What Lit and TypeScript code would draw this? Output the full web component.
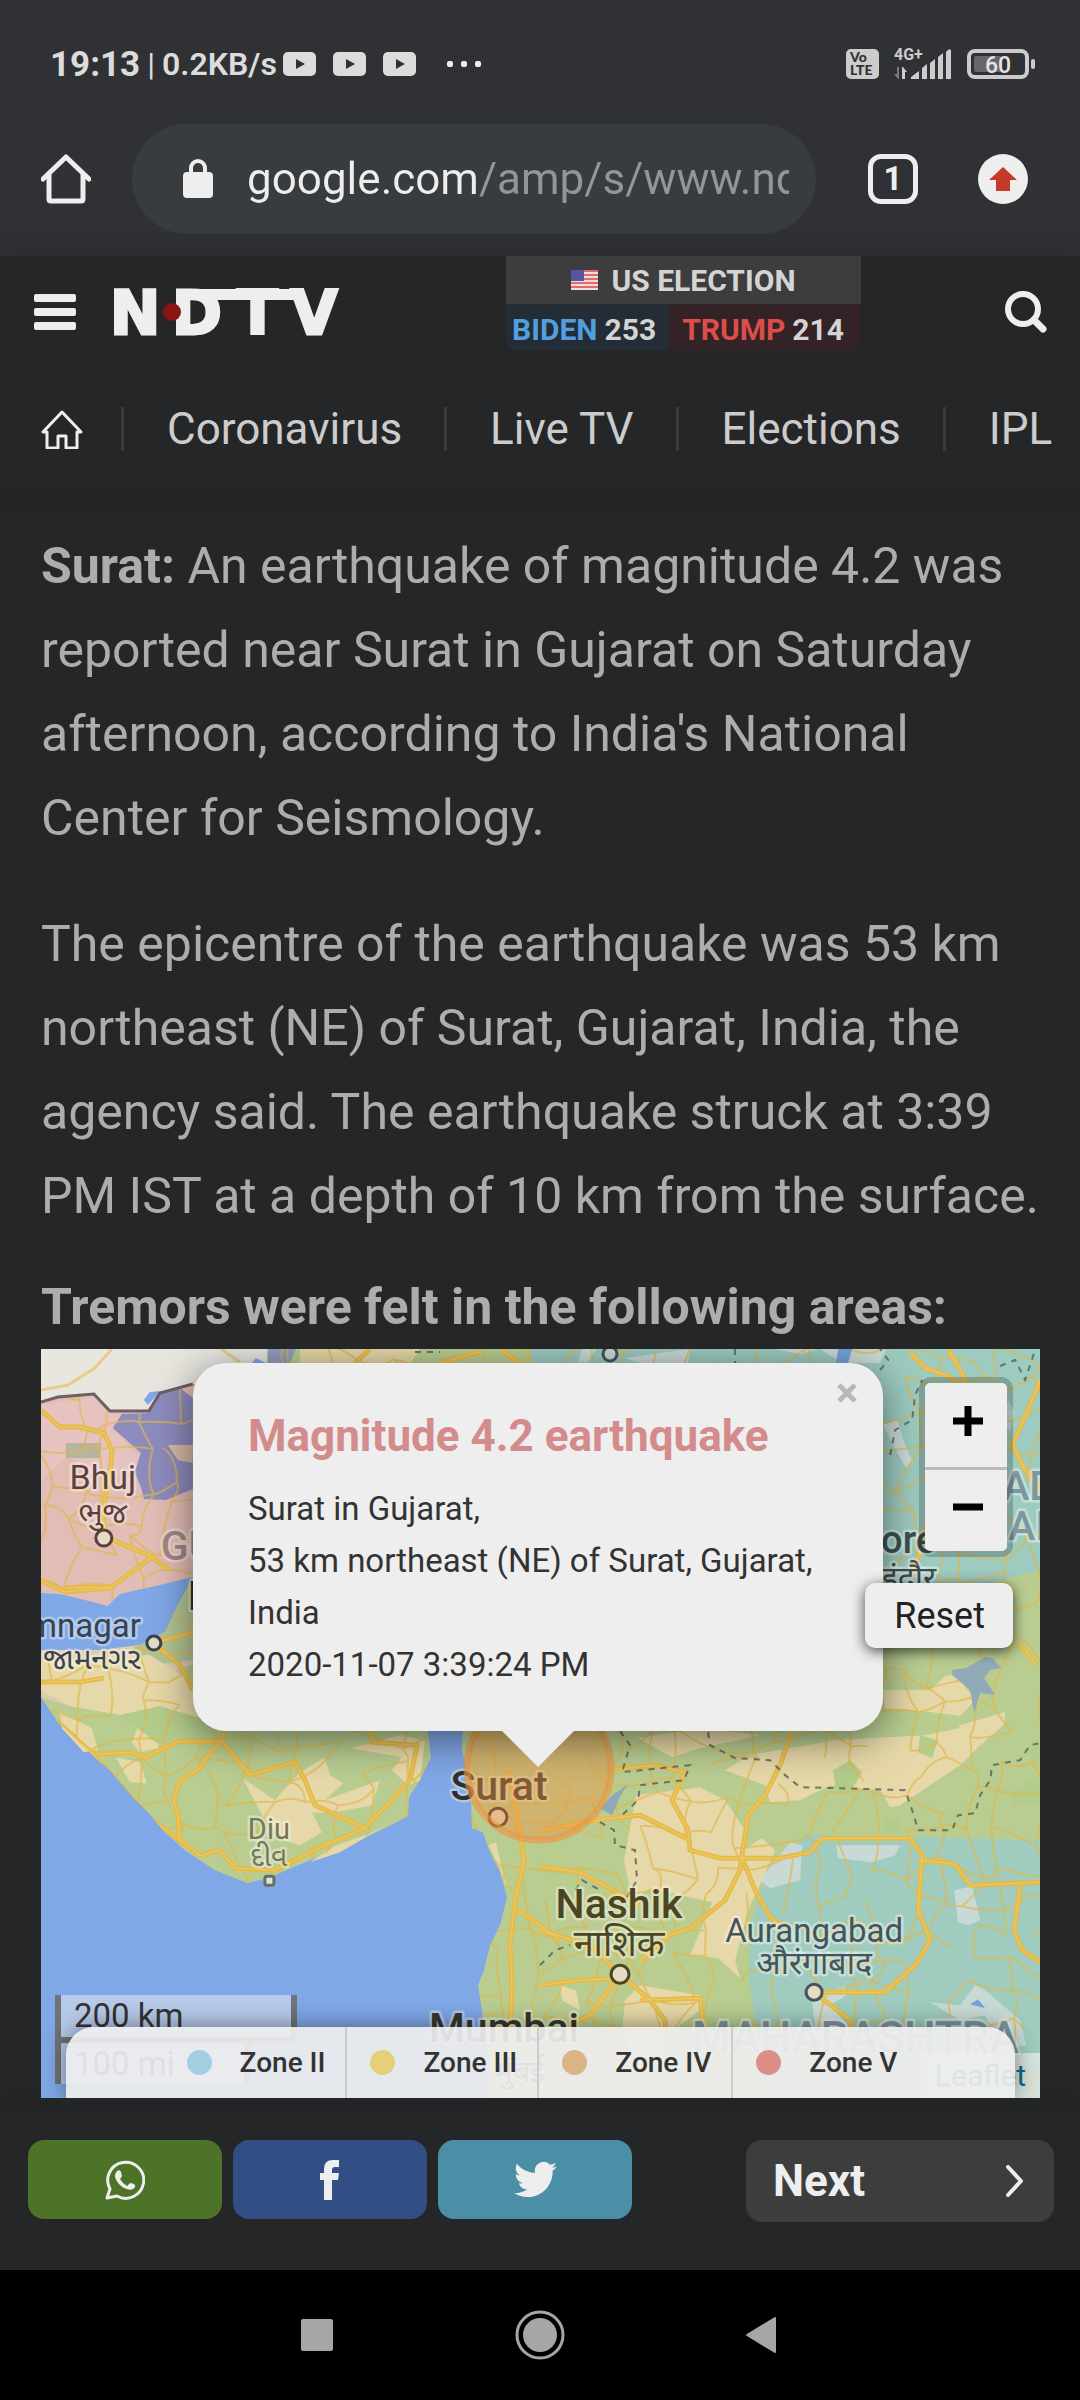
import { LitElement, html, css, svg } from "lit";
import { customElement, property } from "lit/decorators.js";
import { styleMap } from "lit/directives/style-map.js";

/* Coordinates of the map drawing share one user space: 41..1040 by 1349..2098. */

const MAINLAND =
  "M463 1731L462 1750 467 1768 471 1800 472 1828 483 1832 489 1850 500 1872 507 1897 500 1925 490 1945 484 1970 478 1985 482 2010 486 2040 488 2098H1040V1349H268L262 1420 430 1600Z";
const SAURASHTRA =
  "M41 1650L100 1650 140 1645 165 1632 178 1605 193 1577 300 1560 430 1600 428 1731 431 1757 420 1780 409 1797 408 1816 385 1828 365 1837 340 1848 310 1860 270 1877 248 1883 215 1870 185 1850 165 1832 150 1814 133 1797 110 1770 95 1757 75 1738 58 1722 41 1697Z";
const KUTCH =
  "M41 1402L58 1397 94 1394 110 1411 149 1411 160 1393 193 1384 260 1380 300 1560 193 1577 160 1585 120 1594 108 1606 85 1600 60 1594 41 1593Z";

/** Builds a jittered mesh of country roads from a small linear generator. */
function roadMesh(cell: number): string {
  let seed = 41;
  const rnd = () => {
    seed = (seed * 1103515245 + 12345) % 2147483648;
    return seed / 2147483648;
  };
  const cols = Math.ceil(1020 / cell) + 1;
  const rows = Math.ceil(770 / cell) + 1;
  const at: number[][][] = [];
  for (let r = 0; r < rows; r++) {
    at.push([]);
    for (let c = 0; c < cols; c++) {
      at[r].push([30 + (c + rnd() * 0.9) * cell, 1340 + (r + rnd() * 0.9) * cell]);
    }
  }
  let d = "";
  const link = (a: number[], b: number[]) => {
    const mx = (a[0] + b[0]) / 2 + (rnd() - 0.5) * 16;
    const my = (a[1] + b[1]) / 2 + (rnd() - 0.5) * 16;
    d += `M${a[0].toFixed(0)} ${a[1].toFixed(0)}Q${mx.toFixed(0)} ${my.toFixed(0)} ${b[0].toFixed(0)} ${b[1].toFixed(0)}`;
  };
  for (let r = 0; r < rows - 1; r++) {
    for (let c = 0; c < cols - 1; c++) {
      if (rnd() < 0.72) link(at[r][c], at[r][c + 1]);
      if (rnd() < 0.72) link(at[r][c], at[r + 1][c]);
    }
  }
  return d;
}
const ROADS = roadMesh(32);

const TAN_PATCHES = [
  "M60 1712L92 1728 98 1750 84 1752 62 1728Z",
  "M140 1722L162 1730 158 1748 140 1752 132 1742Z",
  "M116 1757L140 1762 147 1783 130 1782Z",
  "M243 1778L275 1800 300 1772 325 1757 330 1775 343 1783 325 1800 380 1780 372 1805 330 1813 312 1812 322 1832 300 1845 285 1840 262 1815Z",
  "M350 1748L400 1735 425 1740 420 1780 408 1785 392 1770 402 1757Z",
  "M310 1862L335 1846 368 1834 385 1826 340 1852Z",
  "M41 1660L150 1655 190 1680 240 1725 120 1715 70 1706 41 1690Z",
  "M638 1738L700 1728 760 1735 700 1748 672 1757Z",
  "M725 1770L750 1755 835 1740 925 1735 990 1722 1003 1722 960 1765 900 1805 890 1807 880 1790 830 1785 800 1800 770 1802 765 1785Z",
  "M636 1795L700 1787 725 1800 745 1830 742 1850 762 1838 775 1850 762 1880 750 1905 735 1960 740 1978 718 1958 690 1955 712 1902 650 1888 632 1900 624 1860Z",
  "M625 2000L640 1985 700 1995 705 2060 640 2070 622 2030Z",
  "M560 1985L576 1990 580 2010 562 2000Z",
  "M500 1868L489 1845 496 1842 507 1890Z",
  "M945 1676L955 1674 975 1700 960 1716 930 1712 885 1708 883 1690 930 1690Z",
  "M960 1725L1005 1712 1004 1724 975 1750 930 1780Z",
  "M300 1349H420L400 1380H300Z",
];

const GREEN_PATCHES = [
  "M120 1715L160 1706 190 1715 260 1735 250 1760 200 1750 190 1728 160 1745Z",
  "M833 1770L850 1760 862 1772 850 1792 835 1785Z",
  "M920 1735L938 1740 932 1758 918 1752Z",
  "M1010 1795L1030 1780 1040 1785V1805L1015 1806Z",
  "M885 1818L902 1818 898 1832 884 1828Z",
  "M1028 1745L1040 1745V1765L1030 1762Z",
  "M660 2040L700 2010 740 2030 740 2060 680 2065Z",
];

const PALE_PATCHES = [
  "M760 1880L790 1842 802 1845 800 1880 770 1888Z",
  "M836 1845L900 1845 895 1855 872 1862 838 1858Z",
  "M954 1890L972 1886 980 1920 968 1925 958 1922Z",
  "M812 2000L845 1985 846 1995 830 2005 850 2028 815 2028Z",
  "M930 2002L960 2005 975 1985 985 1990 1020 2020 1026 2045 1000 2050 985 2015 960 2020Z",
  "M883 1425L897 1420 905 1445 913 1462 906 1468 893 1445Z",
  "M1008 1400L1014 1412 1010 1432 1003 1420Z",
  "M582 1349H596L588 1362H578Z",
  "M625 1358L690 1349 688 1363H640Z",
  "M820 1349H886L880 1363H842Z",
  "M775 1349H818L800 1354Z",
];

const MAJOR_ROADS = [
  "M56 1720L93 1754 120 1784 150 1818 180 1840 200 1855",
  "M95 1754L130 1752 145 1757 180 1741 222 1741 228 1720",
  "M180 1841L178 1815 174 1800 180 1780 198 1770 210 1752 222 1741 250 1775 295 1762 305 1780 315 1805 365 1828 410 1780 417 1745 372 1742 372 1730",
  "M198 1856L220 1850 235 1868 275 1870 325 1845 365 1828",
  "M41 1410L60 1427 80 1427 104 1433 112 1450 111 1465 104 1505 104 1536 150 1556 170 1570",
  "M41 1580L65 1592 110 1588 155 1555",
  "M65 1588L110 1587",
  "M154 1643L193 1632M154 1643L180 1665 193 1690",
  "M41 1682L80 1682 104 1678",
  "M508 1770L515 1800 524 1860 515 1900 510 1945 512 1985 508 2098",
  "M515 1908L540 1925 560 1940",
  "M540 1866L580 1872 600 1883 640 1905M540 1930L590 1945 620 1974 605 1995 590 2015 570 2025 552 2060",
  "M620 1974L650 2000 665 2020 668 2060",
  "M540 1985L580 1980 620 1978M640 2000L700 1998 708 2060",
  "M792 1731L780 1765 765 1795 748 1815 742 1855 740 1870 725 1900 690 1928 670 1935 640 1960",
  "M741 1855L755 1890 770 1917 780 1925",
  "M615 1769L655 1765 685 1772 672 1800 688 1830 690 1850 720 1858 780 1858 810 1852 822 1838 910 1838 922 1855 918 1910 930 1940 915 1965 885 1992 814 1992 850 2020 850 2030",
  "M690 1840L660 1825 640 1815 610 1818 540 1830",
  "M922 1860L955 1864 970 1885 1040 1882M1020 1885L1014 1930 1022 1950 1040 1962",
  "M1040 1380L1028 1410 1012 1445 1025 1470 1040 1490",
  "M910 1352L925 1368 945 1375 958 1382M948 1349L960 1370 975 1400",
  "M1018 1645L1025 1650 1036 1665",
  "M912 1575L922 1545 930 1510",
  "M355 1363L370 1349M440 1363L480 1352M500 1349L520 1363",
];

const BORDERS = [
  "M620 1731L630 1745 622 1772 690 1765 684 1780 640 1785 638 1800 622 1815M600 1822L614 1830 615 1845 635 1850 637 1880 625 1900",
  "M708 1732L710 1745 735 1758 770 1760 785 1775 800 1787 905 1790 912 1810 918 1830 952 1830 958 1815 975 1813 980 1795 990 1780 992 1765 1020 1760 1030 1745 1040 1743",
  "M540 1965L555 1950 570 1945M575 1890L582 1880 600 1890",
  "M890 1455L895 1430 912 1420 915 1395 922 1380M880 1370L888 1360 880 1349M1000 1366L1015 1360 1025 1380 1035 1350",
  "M735 1349L735 1363M415 1352L440 1352",
];

interface Place {
  name: string;
  local?: string;
  x: number;
  y: number;
  dy?: number;
  size: number;
  localSize?: number;
  weight?: number;
  anchor?: string;
  fill: string;
  pin?: [number, number, number];
}

const PLACES: Place[] = [
  { name: "Bhuj", local: "ભુજ", x: 103, y: 1489, dy: 34, size: 34, localSize: 30, fill: "#5b3f3f", pin: [104, 1538, 8] },
  { name: "Jamnagar", local: "જામનગર", x: 141, y: 1637, dy: 32, size: 33, localSize: 30, anchor: "end", fill: "#39434e", pin: [154, 1643, 7] },
  { name: "R", x: 188, y: 1610, size: 40, weight: 500, fill: "#2c2c26" },
  { name: "Diu", local: "દીવ", x: 269, y: 1839, dy: 27, size: 29, localSize: 28, fill: "#77765a" },
  { name: "Surat", x: 499, y: 1800, size: 41, weight: 500, fill: "#303029", pin: [498, 1817, 9] },
  { name: "Nashik", local: "नाशिक", x: 619, y: 1918, dy: 38, size: 41, localSize: 36, weight: 500, fill: "#4c4522", pin: [620, 1974, 9] },
  { name: "Aurangabad", local: "औरंगाबाद", x: 814, y: 1942, dy: 32, size: 33, localSize: 32, fill: "#44545a", pin: [814, 1992, 8] },
  { name: "Mumbai", x: 504, y: 2042, size: 41, weight: 500, fill: "#37372c" },
  { name: "मुंबई", x: 520, y: 2082, size: 30, fill: "#55554a" },
  { name: "Indore", local: "इंदौर", x: 936, y: 1553, dy: 36, size: 38, localSize: 32, weight: 500, anchor: "end", fill: "#3c4f51" },
];

@customElement("quake-map-art")
export class QuakeMapArt extends LitElement {
  static styles = css`
    :host {
      display: block;
      height: 100%;
    }
    .art {
      display: block;
      width: 100%;
      height: 100%;
      font-family: Roboto, "Noto Sans", "Noto Sans Gujarati", "Noto Sans Devanagari", sans-serif;
    }
    .halo {
      paint-order: stroke;
      stroke-width: 5px;
      stroke-linejoin: round;
      stroke: #ffffff;
      stroke-opacity: 0.4;
    }
    .region {
      font-size: 41px;
      font-weight: 500;
      fill: #7d97a0;
    }
    .gujarat {
      fill: #a88585;
    }
    .state {
      font-size: 44px;
    }
  `;

  private place(p: Place) {
    const anchor = p.anchor ?? (p.name.length === 1 ? "start" : "middle");
    return svg`
      <g class="halo" fill=${p.fill} text-anchor=${anchor}>
        <text x=${p.x} y=${p.y} font-size=${p.size} font-weight=${p.weight ?? 400}>${p.name}</text>
        ${p.local ? svg`<text x=${p.x} y=${p.y + (p.dy ?? 0)} font-size=${p.localSize ?? 28}>${p.local}</text>` : ""}
      </g>
      ${p.pin ? svg`<circle cx=${p.pin[0]} cy=${p.pin[1]} r=${p.pin[2]} fill="#e6dcc4" stroke=${p.fill} stroke-width="3"></circle>` : ""}`;
  }

  render() {
    return html`
      <svg class="art" viewBox="41 1349 999 749" preserveAspectRatio="xMidYMid slice" role="img" aria-label="Map of western India">
        <defs>
          <clipPath id="land"><path d="${MAINLAND}${SAURASHTRA}${KUTCH}"></path></clipPath>
        </defs>
        <rect x="41" y="1349" width="999" height="749" fill="#80a7e6"></rect>
        <path d="M41 1349H268L262 1420 193 1384 160 1393 149 1411H110L94 1394 58 1397 41 1402Z" fill="#e8e6df"></path>
        <path d="M150 1392L144 1400 148 1405 158 1394 162 1391ZM252 1363L256 1358 266 1363Z" fill="#7fa9ea"></path>
        <path d=${MAINLAND} fill="#b9cd91"></path>
        <path d="M268 1349H296L290 1363H268Z" fill="#93a0be"></path>
        <path d="M530 1349H1040V1570L960 1590 883 1602 560 1500Z" fill="#9dcbc0"></path>
        <path d=${SAURASHTRA} fill="#b9cd91"></path>
        <path d="M41 1650L100 1650 140 1645 165 1632 193 1620V1664L120 1690 70 1706 41 1697Z" fill="#dccdb0"></path>
        <path d="M165 1632L178 1605 193 1590V1660L150 1665 130 1650Z" fill="#b3c594"></path>
        <path d=${KUTCH} fill="#e2bdb5"></path>
        <path d="M41 1405L94 1397 110 1414 125 1415 113 1430 138 1456 135 1470 90 1480 70 1455 41 1480Z" fill="#e6c3c0"></path>
        <path d="M160 1394L180 1388 193 1398V1489L166 1500 144 1499 142 1490 135 1472 141 1453 113 1428 122 1414 149 1413Z" fill="#8e8cbe"></path>
        <path d="M168 1445L193 1445V1463L178 1460Z" fill="#d8bba6"></path>
        <rect x="66" y="1443" width="35" height="15" fill="#b5b49c"></rect>
        <g fill="#e6d8a8">${TAN_PATCHES.map((d) => svg`<path d=${d}></path>`)}</g>
        <g fill="#b4cc8b">${GREEN_PATCHES.map((d) => svg`<path d=${d}></path>`)}</g>
        <path d="M778 2098L766 2050 755 2020 749 1980 750 1930 760 1892 785 1855 806 1834 1040 1840V2098Z" fill="#9fccbf"></path>
        <g fill="#c9dad6">${PALE_PATCHES.map((d) => svg`<path d=${d}></path>`)}</g>
        <g clip-path="url(#land)" fill="none" stroke-linejoin="round">
          <path d=${ROADS} stroke="#dfb74c" stroke-width="2" opacity="0.66"></path>
          ${MAJOR_ROADS.map((d) => svg`<path d=${d} stroke="#e6bb48" stroke-width="5"></path>`)}
          ${MAJOR_ROADS.map((d) => svg`<path d=${d} stroke="#eacb70" stroke-width="1"></path>`)}
        </g>
        <path d="M41 1390L68 1385 95 1368 112 1349M221 1349L240 1362" fill="none" stroke="#e8cd8a" stroke-width="3"></path>
        <path d="M41 1402L58 1397 94 1394 110 1411 149 1411 160 1393 193 1384" fill="none" stroke="#6d5f63" stroke-width="3"></path>
        <g fill="none" stroke="#5a665c" stroke-width="2" stroke-dasharray="6 6" opacity="0.85">
          ${BORDERS.map((d) => svg`<path d=${d}></path>`)}
        </g>
        <path d="M952 1670L966 1668 985 1657 992 1658 1001 1668 990 1670 984 1678 995 1695 980 1693 974 1713 970 1690 952 1675Z" fill="#92a9b8"></path>
        <path d="M600 1808L612 1795 628 1784 620 1796 612 1815Z" fill="#8fa9bb"></path>
        <path d="M970 2004L978 1999 985 2008Z" fill="#74a0e0"></path>
        <path d="M838 1349H852L848 1363H836Z" fill="#76a2dc"></path>
        <circle cx="610" cy="1354" r="7" fill="#c9dad6" stroke="#44545a" stroke-width="3"></circle>
        <g class="region">
          <text class="halo gujarat" x="161" y="1560">GU</text>
          <text class="halo" x="1002" y="1500">AD</text>
          <text class="halo" x="1008" y="1540">AI</text>
          <text class="halo state" x="692" y="2053">MAHARASHTRA</text>
        </g>
        ${PLACES.map((p) => this.place(p))}
        <rect x="265" y="1876" width="9" height="9" rx="2" fill="#dde4d8" stroke="#66705f" stroke-width="3"></rect>
        <circle cx="539" cy="1768" r="72" fill="#ea9142" fill-opacity="0.44" stroke="#ea9642" stroke-opacity="0.62" stroke-width="7"></circle>
      </svg>
    `;
  }
}

@customElement("status-bar")
export class StatusBar extends LitElement {
  static styles = css`
    :host {
      display: flex;
      align-items: center;
      height: 44px;
      padding: 42px 45px 0 50px;
      color: #dcdcdc;
      font-family: Roboto, sans-serif;
      font-weight: 700;
    }
    .time {
      font-size: 35px;
    }
    .bar {
      font-size: 32px;
      font-weight: 400;
      margin: 0 7px;
    }
    .rate {
      font-size: 32px;
      font-weight: 600;
    }
    .notes {
      display: flex;
      gap: 17px;
      margin-left: 6px;
    }
    .system {
      display: flex;
      align-items: center;
      gap: 15px;
      margin-left: auto;
    }
    svg {
      display: block;
      overflow: visible;
    }
  `;

  render() {
    return html`
      <span class="time">19:13</span><span class="bar">|</span><span class="rate">0.2KB/s</span>
      <span class="notes">
        ${[0, 1, 2].map(
          () => html`<svg width="33" height="24" viewBox="0 0 33 24" aria-hidden="true">
            <rect width="33" height="24" rx="5" fill="#dcdcdc"></rect>
            <path d="M13 7V17L22 12Z" fill="#303135"></path>
          </svg>`,
        )}
        <svg width="48" height="24" viewBox="0 0 48 24" aria-hidden="true" fill="#eeeeee">
          <rect x="14" y="9" width="6" height="6" rx="2"></rect>
          <rect x="28" y="9" width="6" height="6" rx="2"></rect>
          <rect x="42" y="9" width="6" height="6" rx="2"></rect>
        </svg>
      </span>
      <span class="system">
        <svg width="33" height="30" viewBox="0 0 33 30" font-family="Lato, sans-serif" font-weight="900" fill="#303135">
          <rect width="33" height="30" rx="5" fill="#cccccc"></rect>
          <text x="4" y="13" font-size="14">Vo</text>
          <text x="4" y="26" font-size="14">LTE</text>
        </svg>
        <svg width="58" height="32" viewBox="0 0 58 32" fill="#cccccc">
          <text x="0" y="12" font-size="16" font-weight="700">4G+</text>
          <path d="M3 19H5V31H4L0 26H3Z" fill="#77787a"></path>
          <path d="M8 31V19H9L13 24H11V31Z"></path>
          <path d="M17 31V29L25 23V31ZM28 31V20L33 16V31ZM36 31V15L41 11V31ZM44 31V9L49 5V31ZM52 31V4Q55 0 57 2V31Z"></path>
        </svg>
        <svg width="68" height="30" viewBox="0 0 68 30">
          <rect x="2" y="2" width="58" height="26" rx="6" fill="none" stroke="#cccccc" stroke-width="4"></rect>
          <rect x="7" y="7" width="28" height="16" rx="2" fill="#666769"></rect>
          <rect x="64" y="10" width="4" height="10" rx="2" fill="#cccccc"></rect>
          <text x="31" y="24" font-size="23" font-weight="500" text-anchor="middle" fill="#e4e4e4">60</text>
        </svg>
      </span>
    `;
  }
}

@customElement("browser-bar")
export class BrowserBar extends LitElement {
  static styles = css`
    :host {
      display: flex;
      align-items: center;
      padding: 38px 52px 22px 41px;
      font-family: Roboto, sans-serif;
    }
    button {
      display: block;
      border: 0;
      padding: 0;
      background: none;
      font: inherit;
      color: inherit;
    }
    svg {
      display: block;
    }
    .box {
      display: flex;
      align-items: center;
      flex: 1;
      min-width: 0;
      gap: 34px;
      height: 110px;
      box-sizing: border-box;
      margin: 0 52px 0 41px;
      padding: 0 27px 0 51px;
      border-radius: 55px;
      background: #383c3f;
    }
    .url {
      flex: 1;
      min-width: 0;
      height: 60px;
      border: 0;
      padding: 0;
      outline: 0;
      font-family: Roboto, sans-serif;
      font-size: 44px;
      color: transparent;
      background: linear-gradient(90deg, #eeeeee 231px, #939697 231px);
      -webkit-background-clip: text;
      background-clip: text;
    }
    .tabs {
      width: 50px;
      height: 50px;
      box-sizing: border-box;
      border: 5px solid #eeeeee;
      border-radius: 13px;
      color: #eeeeee;
      font-size: 33px;
      font-weight: 700;
      line-height: 40px;
      text-align: center;
    }
    .update {
      margin-left: 60px;
    }
  `;

  render() {
    return html`
      <button aria-label="Home">
        <svg width="50" height="50" viewBox="0 0 50 50" fill="none" stroke="#eeeeee" stroke-width="5" stroke-linejoin="round" stroke-linecap="round">
          <path d="M2 25L25 3L48 25"></path>
          <path d="M8 21V45Q8 47 10 47H40Q42 47 42 45V21"></path>
        </svg>
      </button>
      <div class="box">
        <svg width="30" height="40" viewBox="0 0 30 40" aria-hidden="true">
          <rect y="13" width="30" height="26" rx="4" fill="#eeeeee"></rect>
          <path d="M8 15V9A7 7 0 0 1 22 9V15" fill="none" stroke="#eeeeee" stroke-width="4"></path>
        </svg>
        <input class="url" type="text" aria-label="Address" .value=${"google.com/amp/s/www.ndtv.com"} />
      </div>
      <button class="tabs" aria-label="Open tabs">1</button>
      <button class="update" aria-label="Update available">
        <svg width="50" height="50" viewBox="0 0 50 50">
          <circle cx="25" cy="25" r="25" fill="#eeeeee"></circle>
          <path d="M25 13L39 26H32V37H18V26H11Z" fill="#c53929"></path>
        </svg>
      </button>
    `;
  }
}

@customElement("site-header")
export class SiteHeader extends LitElement {
  static styles = css`
    :host {
      display: block;
      background: #252628;
      box-shadow: 0 0 24px rgba(0, 0, 0, 0.15);
      font-family: Roboto, sans-serif;
    }
    svg {
      display: block;
    }
    button {
      display: block;
      border: 0;
      padding: 0;
      background: none;
    }
    a {
      color: inherit;
      text-decoration: none;
    }
    .top {
      display: flex;
      align-items: center;
      height: 112px;
      padding: 0 33px 0 34px;
    }
    .logo {
      margin-left: 34px;
    }
    .mark {
      overflow: visible;
      font-family: "DejaVu Sans", sans-serif;
      font-size: 60px;
      font-weight: 700;
      stroke-linejoin: miter;
    }
    .election {
      display: grid;
      grid-template-columns: auto auto;
      align-self: flex-start;
      margin: 0 144px 0 auto;
      border-radius: 0 0 11px 11px;
      overflow: hidden;
      font-size: 30px;
      font-weight: 700;
      color: #d4d4d4;
    }
    .title {
      grid-column: 1 / -1;
      display: flex;
      align-items: center;
      justify-content: center;
      gap: 13px;
      height: 48px;
      background: #3d3d3d;
    }
    .side {
      display: flex;
      align-items: center;
      gap: 7px;
      height: 46px;
      padding: 5px 13px 0 6px;
      box-sizing: border-box;
    }
    .blue {
      background: #242d35;
    }
    .blue .who {
      color: #519fde;
    }
    .red {
      padding: 5px 17px 0 13px;
      background: #342326;
    }
    .red .who {
      color: #dc4d4b;
    }
    .nav {
      display: flex;
      align-items: center;
      height: 122px;
      padding-left: 41px;
      overflow: hidden;
      white-space: nowrap;
      font-size: 44px;
      color: #cccccc;
    }
    .item {
      border-left: 3px solid #3b3b3d;
      line-height: 44px;
      padding: 0 42px 0 43px;
    }
    .home {
      padding-right: 38px;
    }
  `;

  @property({ attribute: false }) links: string[] = [];

  render() {
    return html`
      <div class="top">
        <button aria-label="Menu">
          <svg width="42" height="36" viewBox="0 0 42 36" fill="#eeeeee">
            <rect width="42" height="8" rx="2"></rect>
            <rect y="14" width="42" height="8" rx="2"></rect>
            <rect y="28" width="42" height="8" rx="2"></rect>
          </svg>
        </button>
        <a class="logo" href="#home" aria-label="NDTV">
          <svg class="mark" width="234" height="46" viewBox="0 0 234 46" fill="#eeeeee" stroke="#eeeeee">
            <text x="0 62 127 181" y="45" stroke-width="3">NDTV</text>
            <rect x="66" y="0" width="128" height="11" stroke="none"></rect>
            <circle cx="62" cy="23" r="9" fill="#8b1414" stroke="none"></circle>
          </svg>
        </a>
        <div class="election">
          <span class="title">
            <svg width="27" height="20" viewBox="0 0 27 20" aria-hidden="true">
              <rect width="27" height="20" fill="#f0dede"></rect>
              <path d="M0 1H27M0 5H27M0 9H27M0 13H27M0 17H27" stroke="#e06a6e" stroke-width="2"></path>
              <rect width="13" height="11" fill="#5656a0"></rect>
            </svg>
            US ELECTION
          </span>
          <span class="side blue"><span class="who">BIDEN</span><span>253</span></span>
          <span class="side red"><span class="who">TRUMP</span><span>214</span></span>
        </div>
        <button aria-label="Search">
          <svg width="42" height="42" viewBox="0 0 42 42" fill="none" stroke="#eeeeee" stroke-linecap="round">
            <circle cx="18" cy="18" r="15" stroke-width="6"></circle>
            <path d="M29 29L38 38" stroke-width="7"></path>
          </svg>
        </button>
      </div>
      <nav class="nav">
        <a class="home" href="#home" aria-label="Home">
          <svg width="42" height="40" viewBox="0 0 42 40" fill="none" stroke="#eeeeee" stroke-width="3" stroke-linejoin="round">
            <path d="M21 3L2 23H6V39H17V27H25V39H36V23H40Z"></path>
          </svg>
        </a>
        ${this.links.map((l) => html`<a class="item" href="#${l}">${l}</a>`)}
      </nav>
    `;
  }
}

@customElement("quake-map")
export class QuakeMap extends LitElement {
  static styles = css`
    :host {
      display: block;
      position: relative;
      aspect-ratio: 4 / 3;
      overflow: hidden;
      font-family: Roboto, sans-serif;
    }
    button {
      display: block;
      border: 0;
      padding: 0;
      background: #eeeeee;
      font-family: Roboto, sans-serif;
    }
    svg {
      display: block;
    }
    .scale {
      position: absolute;
      left: 14px;
      bottom: 14px;
      font-size: 33px;
      color: #333333;
    }
    .km,
    .mi {
      box-sizing: border-box;
      border: 6px solid #707377;
      border-top: 0;
      padding-left: 13px;
      background: rgba(238, 238, 238, 0.5);
      line-height: 41px;
    }
    .km {
      width: 242px;
      height: 48px;
    }
    .mi {
      width: 195px;
      height: 41px;
      border-bottom: 0;
    }
    .credit {
      position: absolute;
      right: 0;
      bottom: 0;
      padding: 0 14px;
      background: rgba(238, 238, 238, 0.7);
      color: #0e6b8c;
      font-size: 30px;
      line-height: 45px;
      text-decoration: none;
    }
    .legend {
      position: absolute;
      left: 25px;
      right: 25px;
      bottom: 0;
      display: flex;
      justify-content: center;
      margin: 0;
      padding: 0;
      border-radius: 28px 28px 0 0;
      background: rgba(238, 238, 238, 0.92);
      box-shadow: 0 0 24px rgba(0, 0, 0, 0.45);
      list-style: none;
      color: #333333;
      font-size: 28px;
      font-weight: 500;
      line-height: 71px;
    }
    .zone {
      display: flex;
      align-items: center;
      gap: 28px;
      padding: 0 20px 0 23px;
    }
    .zone + .zone {
      border-left: 2px solid #cccccc;
    }
    .dot {
      width: 25px;
      height: 25px;
      border-radius: 50%;
    }
    .popup {
      position: absolute;
      left: 152px;
      right: 157px;
      top: 14px;
      box-sizing: border-box;
      padding: 45px 55px 40px;
      border-radius: 33px;
      background: #eeeeee;
      box-shadow: 0 8px 42px rgba(0, 0, 0, 0.5);
      color: #333333;
      font-size: 33px;
      line-height: 52px;
    }
    .popup h3 {
      margin: 0 0 19px;
      color: #d48b8b;
      font-size: 44px;
      line-height: 56px;
      font-weight: 700;
    }
    .popup p {
      margin: 0;
    }
    .tip {
      position: absolute;
      left: 50%;
      top: 100%;
      width: 72px;
      height: 36px;
      margin-left: -36px;
      background: #eeeeee;
      clip-path: polygon(0 0, 100% 0, 50% 100%);
    }
    .popup .close {
      position: absolute;
      right: 26px;
      top: 20px;
      background: none;
    }
    .zoom {
      position: absolute;
      right: 27px;
      top: 28px;
      border: 6px solid rgba(0, 0, 0, 0.2);
      border-radius: 12px;
      background-clip: padding-box;
    }
    .zoom button {
      box-sizing: border-box;
      width: 82px;
      height: 84px;
      padding: 0 0 8px 4px;
      display: grid;
      place-items: center;
      border-radius: 5px 5px 0 0;
    }
    .zoom .out {
      border-top: 3px solid #bbbbbb;
      border-radius: 0 0 5px 5px;
    }
    .reset {
      position: absolute;
      right: 27px;
      top: 234px;
      height: 65px;
      border-radius: 10px;
      padding: 0 28px 0 29px;
      box-shadow: 0 3px 14px rgba(0, 0, 0, 0.7);
      color: #222222;
      font-size: 36px;
    }
  `;

  private zones = [
    { name: "Zone II", color: "#a3cee0" },
    { name: "Zone III", color: "#e5d077" },
    { name: "Zone IV", color: "#dab486" },
    { name: "Zone V", color: "#dc8e89" },
  ];

  render() {
    return html`
      <quake-map-art></quake-map-art>
      <div class="scale">
        <div class="km">200 km</div>
        <div class="mi">100 mi</div>
      </div>
      <a class="credit" href="#leaflet">Leaflet</a>
      <ul class="legend">
        ${this.zones.map(
          (z) => html`<li class="zone"><span class="dot" style=${styleMap({ background: z.color })}></span>${z.name}</li>`,
        )}
      </ul>
      <div class="popup">
        <h3>Magnitude 4.2 earthquake</h3>
        <p>Surat in Gujarat,</p>
        <p>53 km northeast (NE) of Surat, Gujarat, India</p>
        <p>2020-11-07 3:39:24 PM</p>
        <button class="close" aria-label="Close popup">
          <svg width="20" height="20" viewBox="0 0 20 20" stroke="#b8b8b8" stroke-width="5">
            <path d="M2 2L18 18M18 2L2 18"></path>
          </svg>
        </button>
        <span class="tip"></span>
      </div>
      <div class="zoom">
        <button aria-label="Zoom in">
          <svg width="30" height="30" viewBox="0 0 30 30" stroke="#000000" stroke-width="7"><path d="M0 15H30M15 0V30"></path></svg>
        </button>
        <button class="out" aria-label="Zoom out">
          <svg width="30" height="30" viewBox="0 0 30 30" stroke="#000000" stroke-width="7"><path d="M0 15H30"></path></svg>
        </button>
      </div>
      <button class="reset">Reset</button>
    `;
  }
}

@customElement("share-bar")
export class ShareBar extends LitElement {
  static styles = css`
    :host {
      display: flex;
      align-items: flex-start;
      gap: 11px;
      padding: 28px 26px 48px 28px;
      background: #252628;
      box-shadow: 0 0 24px rgba(0, 0, 0, 0.15);
      font-family: Roboto, sans-serif;
    }
    svg {
      display: block;
    }
    .share,
    .next {
      display: flex;
      align-items: center;
      box-sizing: border-box;
      border-radius: 16px;
      color: #eeeeee;
      text-decoration: none;
    }
    .share {
      flex: 0 1 194px;
      height: 79px;
      justify-content: center;
    }
    .wa {
      background: #4d7328;
    }
    .fb {
      background: #334d85;
    }
    .tw {
      background: #4b8fa6;
    }
    .next {
      flex: 0 1 308px;
      justify-content: space-between;
      height: 82px;
      margin-left: auto;
      padding: 0 30px 0 27px;
      background: #3d3d3d;
      font-size: 44px;
      font-weight: 700;
    }
  `;

  render() {
    return html`
      <a class="share wa" href="#whatsapp" aria-label="Share on WhatsApp">
        <svg width="40" height="40" viewBox="0 0 40 40">
          <path d="M2 38L5 29A18 18 0 1 1 12 36Z" fill="none" stroke="#eeeeee" stroke-width="3" stroke-linejoin="round"></path>
          <path d="M12 11Q15 9 16 12L17 16Q16 18 15 19Q18 24 22 26L25 23Q28 23 30 25Q31 27 28 29Q25 31 19 28Q12 24 10 17Q10 13 12 11Z" fill="#eeeeee"></path>
        </svg>
      </a>
      <a class="share fb" href="#facebook" aria-label="Share on Facebook">
        <svg width="20" height="40" viewBox="0 0 20 40" fill="#eeeeee">
          <path d="M19 0V7H15Q12 7 12 10V13H19L18 20H12V40H4V20H0V13H4V9Q4 0 13 0Z"></path>
        </svg>
      </a>
      <a class="share tw" href="#twitter" aria-label="Share on Twitter">
        <svg width="43" height="43" viewBox="0 0 24 24" fill="#eeeeee">
          <path d="M23.953 4.57a10 10 0 01-2.825.775 4.958 4.958 0 002.163-2.723c-.951.555-2.005.959-3.127 1.184a4.92 4.92 0 00-8.384 4.482C7.69 8.095 4.067 6.13 1.64 3.162a4.822 4.822 0 00-.666 2.475c0 1.71.87 3.213 2.188 4.096a4.904 4.904 0 01-2.228-.616v.06a4.923 4.923 0 003.946 4.827 4.996 4.996 0 01-2.212.085 4.936 4.936 0 004.604 3.417 9.867 9.867 0 01-6.102 2.105c-.39 0-.779-.023-1.17-.067a13.995 13.995 0 007.557 2.209c9.053 0 13.998-7.496 13.998-13.985 0-.21 0-.42-.015-.63A9.935 9.935 0 0024 4.59z"></path>
        </svg>
      </a>
      <a class="next" href="#next">
        Next
        <svg width="18" height="32" viewBox="0 0 18 32" fill="none" stroke="#eeeeee" stroke-width="4" stroke-linecap="round" stroke-linejoin="round" aria-hidden="true">
          <path d="M2 2L15 16L2 30"></path>
        </svg>
      </a>
    `;
  }
}

@customElement("system-nav")
export class SystemNav extends LitElement {
  static styles = css`
    :host {
      display: flex;
      align-items: center;
      justify-content: center;
      gap: 173px;
      height: 130px;
      background: #000000;
    }
    button {
      display: grid;
      place-items: center;
      width: 50px;
      height: 50px;
      border: 0;
      padding: 0;
      background: none;
    }
  `;

  render() {
    return html`
      <button aria-label="Recent apps">
        <svg width="32" height="32" viewBox="0 0 32 32"><rect width="32" height="32" rx="2" fill="#a6a6a6"></rect></svg>
      </button>
      <button aria-label="Home screen">
        <svg width="50" height="50" viewBox="0 0 50 50">
          <circle cx="25" cy="25" r="23" fill="none" stroke="#a6a6a6" stroke-width="3"></circle>
          <circle cx="25" cy="25" r="17" fill="#a6a6a6"></circle>
        </svg>
      </button>
      <button aria-label="Back">
        <svg width="36" height="38" viewBox="0 0 36 38">
          <path d="M30 2V36L2 19Z" fill="#a6a6a6" stroke="#a6a6a6" stroke-width="2" stroke-linejoin="round"></path>
        </svg>
      </button>
    `;
  }
}

@customElement("app-root")
export class AppRoot extends LitElement {
  static styles = css`
    :host {
      display: flex;
      flex-direction: column;
      min-height: 100vh;
      background: #252628;
      font-family: Roboto, sans-serif;
    }
    .chrome {
      background: #303135;
    }
    .story {
      padding: 34px 40px 14px 41px;
      color: #adadad;
      font-size: 50px;
      line-height: 84px;
    }
    .story p {
      margin: 0 0 42px;
    }
    .story h2 {
      margin: -15px 0 0;
      font-size: inherit;
      line-height: 84px;
      font-weight: 700;
    }
    .foot {
      margin-top: auto;
    }
  `;

  private links = ["Coronavirus", "Live TV", "Elections", "IPL"];

  render() {
    return html`
      <div class="chrome">
        <status-bar></status-bar>
        <browser-bar></browser-bar>
      </div>
      <site-header .links=${this.links}></site-header>
      <main class="story">
        <p>
          <strong>Surat:</strong> An earthquake of magnitude 4.2 was reported near Surat in Gujarat on Saturday
          afternoon, according to India's National Center for Seismology.
        </p>
        <p>
          The epicentre of the earthquake was 53 km northeast (NE) of Surat, Gujarat, India, the agency said. The
          earthquake struck at 3:39 PM IST at a depth of 10 km from the surface.
        </p>
        <h2>Tremors were felt in the following areas:</h2>
        <quake-map></quake-map>
      </main>
      <div class="foot">
        <share-bar></share-bar>
        <system-nav></system-nav>
      </div>
    `;
  }
}
